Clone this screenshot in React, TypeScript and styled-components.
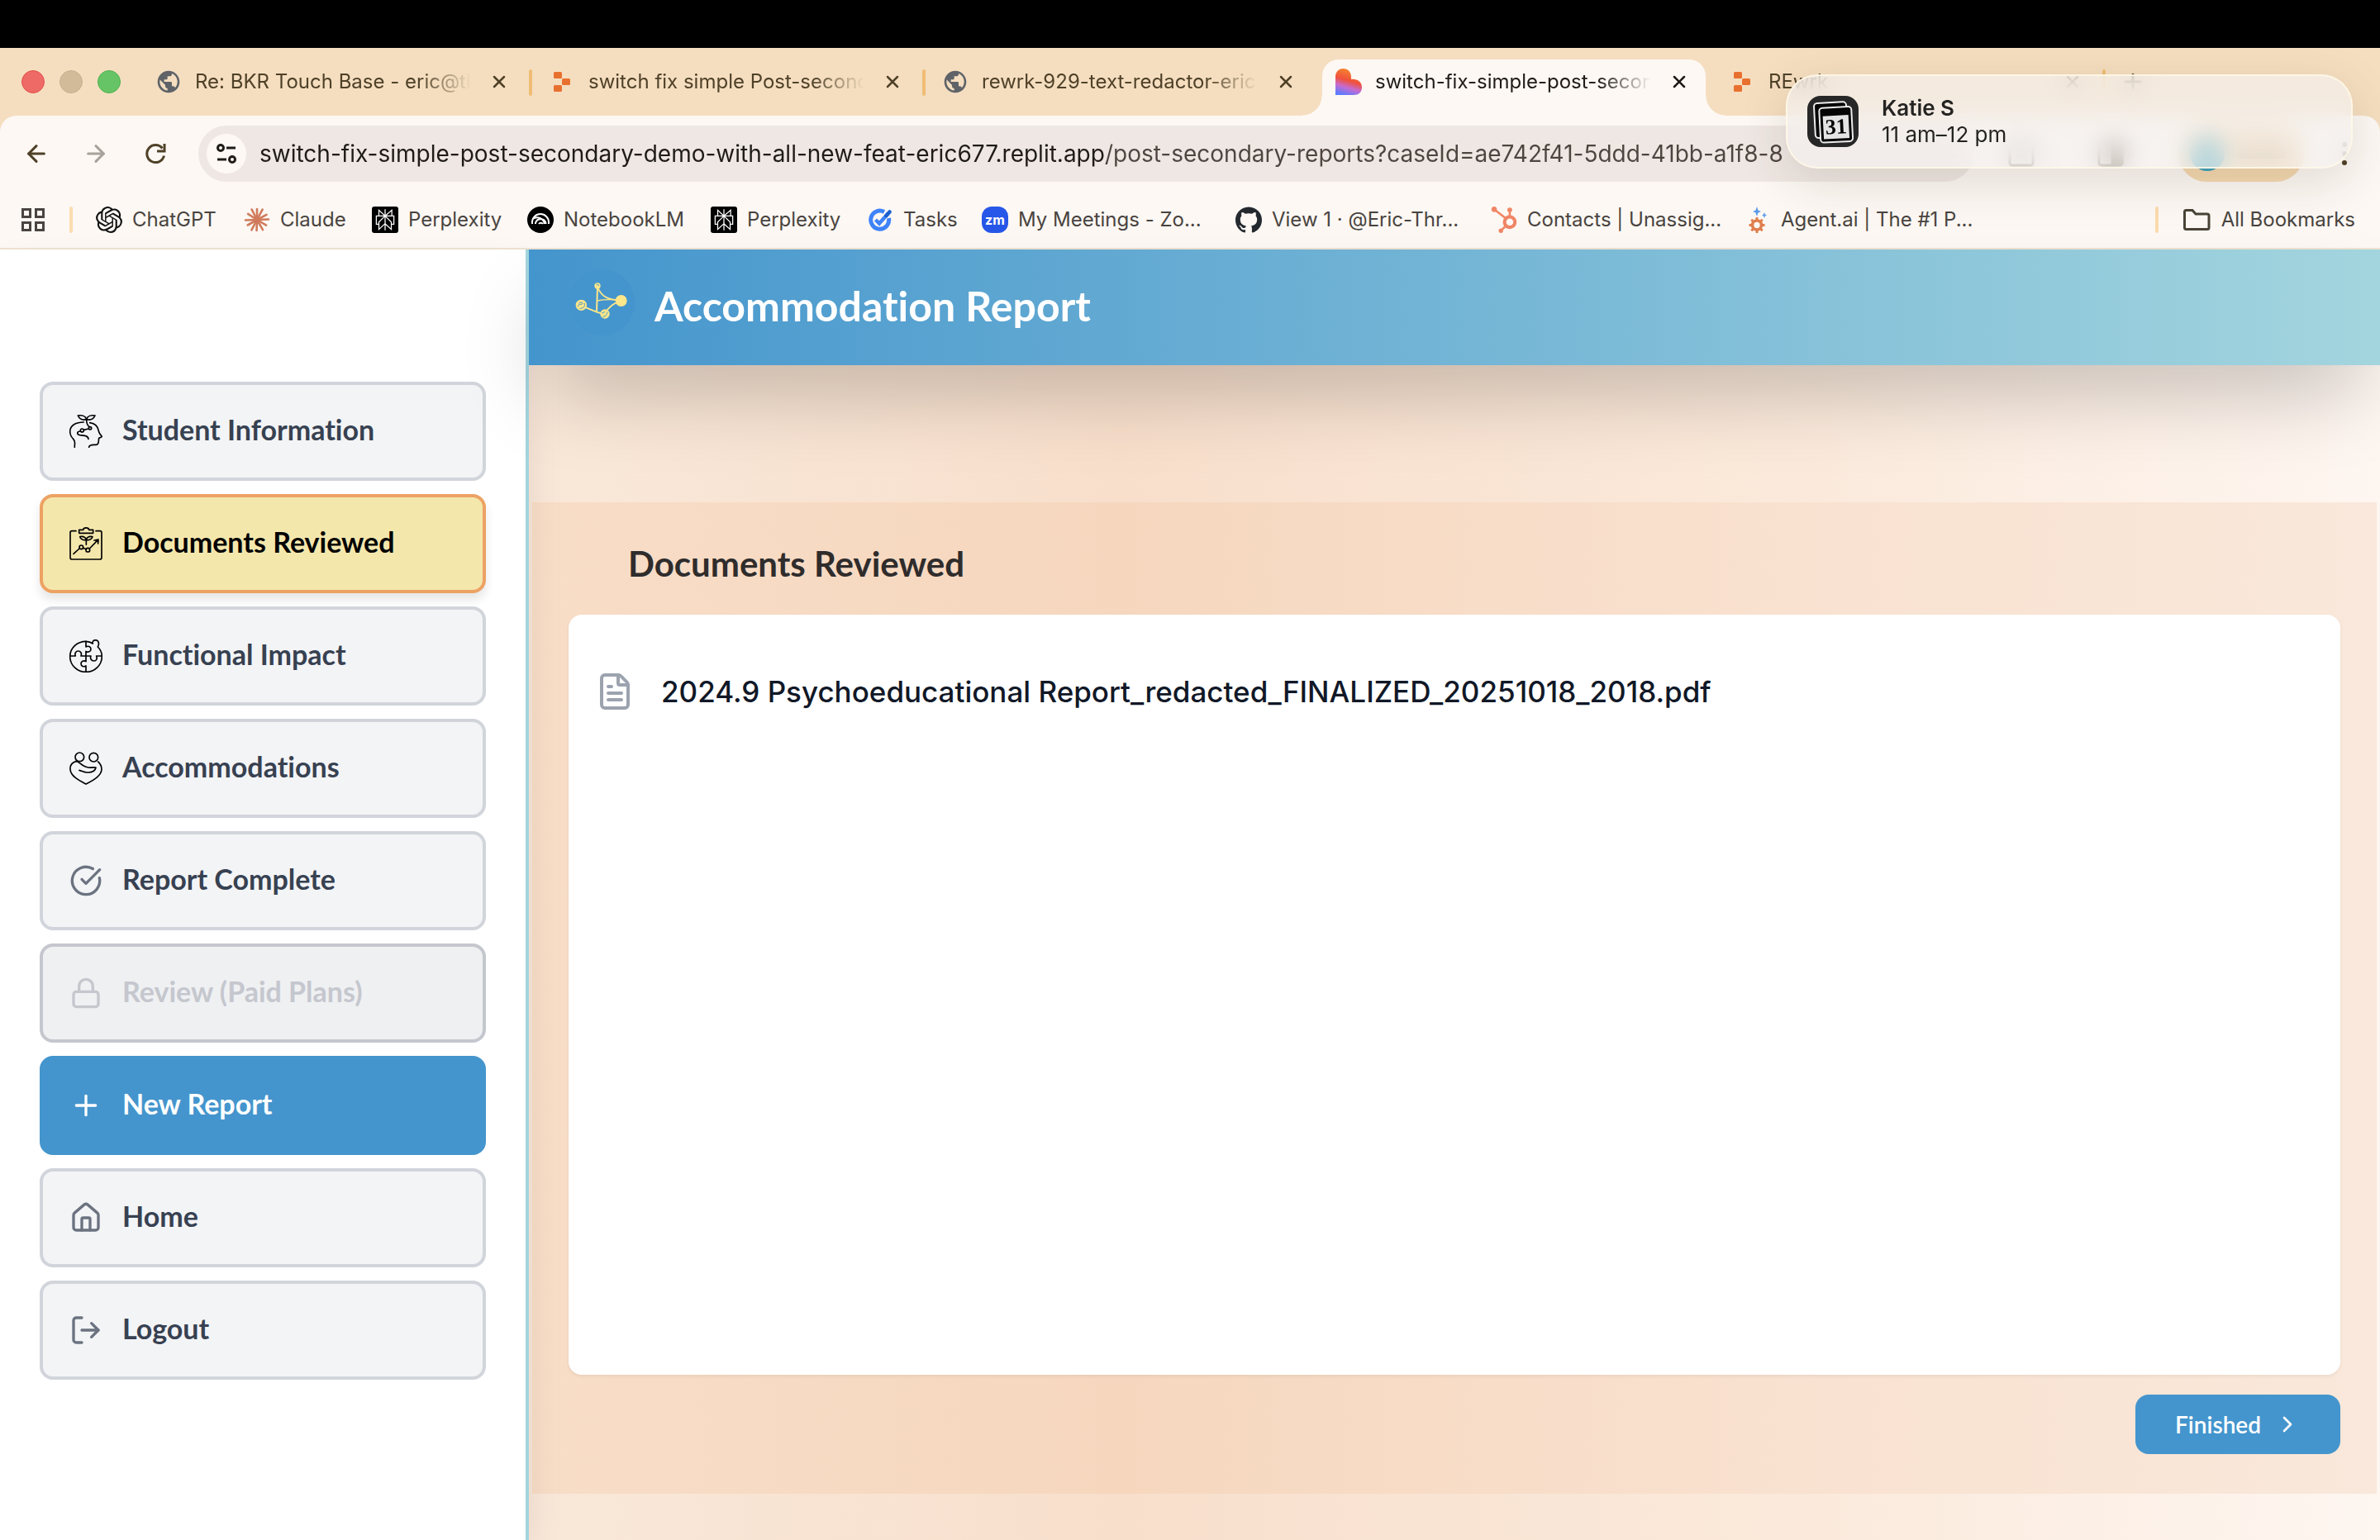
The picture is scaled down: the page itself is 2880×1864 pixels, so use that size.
import React from "react";
import styled, { createGlobalStyle, css } from "styled-components";
import {
  ArrowLeft,
  ArrowRight,
  ChevronRight,
  CircleCheckBig,
  FileText,
  House,
  Lock,
  LogOut,
  Plus,
  X,
} from "lucide-react";
import { SiGithub, SiHubspot, SiOpenai, SiPerplexity } from "react-icons/si";
import { MdPublic } from "react-icons/md";

const ui = `Inter, "Liberation Sans", sans-serif`;
const brand = `Lato, "Open Sans", sans-serif`;

const GlobalStyle = createGlobalStyle`
  *, *::before, *::after { box-sizing: border-box; }
  body { margin: 0; background: #fff; font-family: ${ui}; font-variant-ligatures: none; }
  button, input { font: inherit; color: inherit; }
  button { background: none; border: 0; padding: 0; cursor: pointer; font-variant-ligatures: none; }
  a { color: inherit; text-decoration: none; }
`;

const Page = styled.div`
  display: flex;
  flex-direction: column;
  min-height: 100vh;
`;

const MenuBar = styled.div`
  height: 58px;
  background: #000;
`;

/* ---------- browser chrome ---------- */

const Chrome = styled.header`
  position: relative;
  background: #f5dec0;
  color: #4f4128;
`;

const TabStrip = styled.div`
  display: flex;
  height: 82px;
  padding-left: 26px;
  overflow: hidden;
`;

const Lights = styled.div`
  display: flex;
  flex: none;
  align-items: center;
  gap: 18px;
  width: 140px;
`;

const Light = styled.button<{ $fill: string; $edge: string }>`
  width: 28px;
  height: 28px;
  border-radius: 50%;
  background: ${(p) => p.$fill};
  border: 1px solid ${(p) => p.$edge};
`;

const Tab = styled.div<{ $active?: boolean; $line?: boolean }>`
  position: relative;
  display: flex;
  align-items: center;
  flex: 0 1 476px;
  min-width: 0;
  padding: 0 24px 0 22px;

  ${(p) =>
    p.$line &&
    css`
      &::after {
        content: "";
        position: absolute;
        right: -2px;
        top: 26px;
        width: 4px;
        height: 32px;
        border-radius: 2px;
        background: #f0bd74;
      }
    `}
`;

const ActiveShape = styled.div`
  position: absolute;
  inset: 14px 6px 0;
  border-radius: 20px 20px 0 0;
  background: #fdf8f4;

  &::before,
  &::after {
    content: "";
    position: absolute;
    bottom: 0;
    width: 24px;
    height: 24px;
  }
  &::before {
    right: 100%;
    background: radial-gradient(circle at 0 0, transparent 23px, #fdf8f4 24px);
  }
  &::after {
    left: 100%;
    background: radial-gradient(circle at 100% 0, transparent 23px, #fdf8f4 24px);
  }
`;

const TabIcon = styled.span`
  position: relative;
  display: flex;
  flex: none;
  align-items: center;
  justify-content: center;
  width: 32px;
  height: 32px;
  margin-right: 16px;
`;

const TabTitle = styled.button<{ $active?: boolean }>`
  position: relative;
  flex: 1;
  min-width: 0;
  text-align: left;
  white-space: nowrap;
  font-size: 24px;
  line-height: 32px;
  color: ${(p) => (p.$active ? "#1f1b16" : "#4f4128")};
  mask-image: linear-gradient(90deg, #000 calc(100% - 64px), transparent);
`;

const TabClose = styled.button<{ $active?: boolean }>`
  position: relative;
  display: flex;
  flex: none;
  margin-left: 20px;
  padding: 2px;
  color: ${(p) => (p.$active ? "#1f1b16" : "#4f4128")};
`;

const NewTab = styled.button`
  display: flex;
  align-items: center;
  padding: 0 20px;
`;

const Bars = styled.div`
  background: #fdf8f4;
  border-radius: 20px 20px 0 0;
  border-bottom: 2px solid #eee2d2;
`;

const Toolbar = styled.div`
  display: flex;
  align-items: center;
  padding: 12px 28px;
  height: 92px;
`;

const NavButtons = styled.div`
  display: flex;
  flex: none;
  gap: 40px;
  margin-right: 36px;
`;

const NavButton = styled.button<{ $dim?: boolean }>`
  display: flex;
  color: ${(p) => (p.$dim ? "#a8a29b" : "#4f4128")};
`;

const Omnibox = styled.div`
  display: flex;
  align-items: center;
  flex: 1;
  height: 68px;
  padding: 0 24px 0 10px;
  border-radius: 34px;
  background: #efe7e3;
`;

const SiteInfo = styled.button`
  display: flex;
  flex: none;
  align-items: center;
  justify-content: center;
  width: 48px;
  height: 48px;
  margin-right: 16px;
  border-radius: 50%;
  background: #fdf8f4;
  color: #1f1b16;
`;

const Address = styled.input`
  flex: 1;
  min-width: 0;
  padding: 0;
  border: 0;
  outline: 0;
  font-size: 28px;
  line-height: 40px;
  color: transparent;
  background: linear-gradient(90deg, #1f1b16 1025px, #4f4540 1025px);
  background-clip: text;
`;

const ToolIcons = styled.div`
  display: flex;
  flex: none;
  align-items: center;
  gap: 72px;
  padding: 0 64px 0 40px;
  color: #4f4128;
`;

const Profile = styled.button`
  display: flex;
  align-items: center;
  gap: 14px;
  flex: none;
  width: 152px;
  height: 68px;
  padding: 0 14px;
  border-radius: 34px;
  background: #f5d9b1;

  &::before {
    content: "";
    width: 42px;
    height: 42px;
    border-radius: 50%;
    background: #3fa3bb;
  }
  &::after {
    content: "";
    width: 62px;
    height: 12px;
    border-radius: 6px;
    background: #b8a283;
  }
`;

const Dots = styled.button`
  display: grid;
  gap: 5px;
  flex: none;
  margin-left: 46px;
  margin-right: 12px;

  i {
    width: 6px;
    height: 6px;
    border-radius: 50%;
    background: #4f4128;
  }
`;

const Bookmarks = styled.nav`
  display: flex;
  align-items: center;
  height: 68px;
  padding: 0 30px 0 24px;
  font-size: 24px;
  line-height: 32px;
  color: #494440;
`;

const AppsButton = styled.button`
  display: flex;
  flex: none;
  padding: 0 2px;
`;

const Divider = styled.span`
  flex: none;
  width: 4px;
  height: 32px;
  border-radius: 2px;
  margin: 0 28px;
  background: #fbdcae;
`;

const Bookmark = styled.a<{ $width?: number }>`
  display: flex;
  align-items: center;
  gap: 12px;
  flex: ${(p) => (p.$width ? `0 0 ${p.$width}px` : "none")};
  white-space: nowrap;

  svg {
    flex: none;
  }
`;

const Spacer = styled.span`
  flex: 1;
`;

const Tile = styled.span<{ $fill: string; $round: number }>`
  display: flex;
  align-items: center;
  justify-content: center;
  width: 32px;
  height: 32px;
  flex: none;
  border-radius: ${(p) => p.$round}px;
  background: ${(p) => p.$fill};
  color: #fff;
  font-size: 16px;
  font-weight: 700;
  line-height: 16px;
`;

/* ---------- notification ---------- */

const Toast = styled.aside`
  position: absolute;
  z-index: 10;
  top: 32px;
  right: 33px;
  display: flex;
  align-items: center;
  gap: 28px;
  width: 686px;
  height: 114px;
  padding: 0 24px;
  border-radius: 38px;
  background: rgba(243, 240, 238, 0.66);
  backdrop-filter: blur(14px);
  border: 2px solid rgba(255, 248, 232, 0.85);
  box-shadow: 0 16px 60px rgba(60, 40, 20, 0.14);
  font-size: 26px;
  line-height: 32px;
  color: #242422;
`;

const ToastTitle = styled.strong`
  display: block;
  font-weight: 600;
`;

/* ---------- application ---------- */

const Shell = styled.div`
  display: flex;
  flex: 1;
`;

const Sidebar = styled.nav`
  position: relative;
  display: flex;
  flex-direction: column;
  gap: 16px;
  flex: none;
  width: 640px;
  padding: 160px 48px 48px;
  background: #fff;
  border-right: 4px solid #a3d5de;
  box-shadow: 0 20px 50px -10px rgba(0, 0, 0, 0.12);
`;

type Tone = "plain" | "current" | "locked" | "primary";

const tones = {
  plain: css`
    background: #f3f4f6;
    border-color: #d1d5db;
    color: #374151;
    svg.line { color: #6b7280; }
  `,
  current: css`
    background: #f4e7ac;
    border-color: #eda263;
    color: #000;
    box-shadow: 0 8px 12px rgba(0, 0, 0, 0.1);
  `,
  locked: css`
    background: #eff0f2;
    border-color: #c5c7ce;
    color: #c5c7ce;
  `,
  primary: css`
    background: #4495cd;
    border-color: #4495cd;
    color: #fff;
  `,
};

const NavItem = styled.button<{ $tone: Tone }>`
  display: flex;
  align-items: center;
  gap: 24px;
  height: 120px;
  padding: 0 32px;
  border: 4px solid;
  border-radius: 16px;
  font-family: ${brand};
  font-size: 34px;
  font-weight: 700;
  line-height: 40px;
  text-align: left;
  ${(p) => tones[p.$tone]}

  svg {
    flex: none;
  }
  svg.art {
    color: #000;
  }
`;

const NavLabel = styled.span`
  padding-bottom: 4px;
`;

const Main = styled.main`
  display: flex;
  flex-direction: column;
  flex: 1;
  min-width: 0;
  background: linear-gradient(90deg, #f9e8d9 0, #f8dfcc 32%, #fbeadc 70%, #fef6f1 100%);
`;

const Banner = styled.div`
  position: relative;
  display: flex;
  align-items: center;
  gap: 24px;
  height: 140px;
  padding: 0 48px;
  background: linear-gradient(90deg, #4495cd, #a3d5de);
  box-shadow: 0 50px 100px -24px rgba(0, 0, 0, 0.25);
`;

const LogoSlot = styled.span`
  display: block;
  height: 92px;
`;

const BannerTitle = styled.h1`
  margin: 0;
  padding-bottom: 4px;
  font-family: ${brand};
  font-size: 50px;
  font-weight: 700;
  line-height: 64px;
  color: #fff;
`;

const Panel = styled.section`
  display: flex;
  flex-direction: column;
  flex: 1;
  margin: 166px 4px 56px;
  padding: 44px 44px 48px;
  background: linear-gradient(90deg, #f8ddc7 0, #f6d7be 32%, #f9e1cf 66%, #f9e8db 100%);
`;

const PanelTitle = styled.h2`
  margin: 0 0 32px;
  padding: 0 72px;
  font-family: ${brand};
  font-size: 42px;
  font-weight: 700;
  line-height: 60px;
  color: #2f2c2c;
`;

const Card = styled.ul`
  flex: 1;
  margin: 0 0 24px;
  padding: 61px 32px;
  list-style: none;
  border-radius: 16px;
  background: #fff;
  box-shadow: 0 2px 4px rgba(0, 0, 0, 0.06);
`;

const FileRow = styled.li`
  display: flex;
  align-items: center;
  gap: 32px;
  padding: 4px 0;
  font-size: 35px;
  font-weight: 500;
  line-height: 56px;
  color: #111827;

  svg {
    flex: none;
    color: #9ca3af;
  }
`;

const Finish = styled.button`
  display: flex;
  align-items: center;
  align-self: flex-end;
  gap: 16px;
  height: 72px;
  padding: 0 48px;
  border-radius: 16px;
  background: #4495cd;
  color: #fff;
  font-family: ${brand};
  font-size: 28px;
  font-weight: 600;
  line-height: 40px;
`;

/* ---------- drawings ---------- */

const ReplitMark = () => (
  <svg width="32" height="32" viewBox="0 0 32 32" fill="#e8702f">
    <rect x="6" y="4" width="10" height="8" rx="1.5" />
    <rect x="16" y="12" width="10" height="8" rx="1.5" />
    <rect x="6" y="20" width="10" height="8" rx="1.5" />
  </svg>
);

const HeartMark = () => (
  <svg width="32" height="32" viewBox="0 0 32 32">
    <defs>
      <linearGradient id="heart" x1="0.6" y1="0" x2="0.3" y2="1">
        <stop offset="0" stopColor="#f58b2c" />
        <stop offset="0.45" stopColor="#f0503c" />
        <stop offset="0.7" stopColor="#c76bd0" />
        <stop offset="1" stopColor="#5b7cff" />
      </linearGradient>
    </defs>
    <path
      fill="url(#heart)"
      d="M0 10C0 4 4 0 9.500 0S19 4 19 10v3c7-1 13 3 13 9.500S28 32 22 32H0Z"
    />
  </svg>
);

const ReloadIcon = () => (
  <svg width="32" height="32" viewBox="0 0 32 32" fill="none" stroke="currentColor" strokeWidth="3">
    <path d="M26.500 18.500A10.500 10.500 0 1 1 24.500 9.500" />
    <path d="M27 4v9h-9" />
  </svg>
);

const TuneIcon = () => (
  <svg width="26" height="26" viewBox="0 0 26 26" fill="none" stroke="currentColor" strokeWidth="3">
    <circle cx="6" cy="6" r="3.500" />
    <path d="M13 6h11M2 20h11" />
    <circle cx="20" cy="20" r="3.500" />
  </svg>
);

const AppsIcon = () => (
  <svg width="28" height="28" viewBox="0 0 28 28" fill="none" stroke="currentColor" strokeWidth="3">
    <path d="M1.500 1.500h9v9h-9zM17.500 1.500h9v9h-9zM1.500 17.500h9v9h-9zM17.500 17.500h9v9h-9z" />
  </svg>
);

const ClaudeMark = () => (
  <svg width="32" height="32" viewBox="-16 -16 32 32" stroke="#d07b5c" strokeWidth="2.600" strokeLinecap="round">
    {[0, 28, 62, 88, 121, 150, 182, 208, 240, 268, 303, 333].map((a, i) => (
      <path key={a} d={`M0 0V${i % 2 ? -14 : -13}`} transform={`rotate(${a})`} />
    ))}
  </svg>
);

const NotebookMark = () => (
  <svg width="32" height="32" viewBox="0 0 32 32" fill="none" stroke="#fff" strokeWidth="2">
    <circle cx="16" cy="16" r="16" fill="#000" stroke="none" />
    <path d="M6 21v-2a10 10 0 0 1 20 0v2M10 21v-1a6.500 6.500 0 0 1 12.500 0v1M14 21a3 3 0 0 1 5 0M6.500 15c6-4 13-1 14.500 6" />
  </svg>
);

const TasksMark = () => (
  <svg width="32" height="32" viewBox="0 0 32 32" fill="none">
    <path d="M21 6.500A11 11 0 1 0 26.500 14" stroke="#3f83f8" strokeWidth="5" />
    <path d="m10.500 16 4.500 4.500L26 8" stroke="#3f83f8" strokeWidth="4.500" />
    <path d="m23.500 11 4-4.500" stroke="#1c5fd0" strokeWidth="4.500" strokeLinecap="round" />
  </svg>
);

const AgentMark = () => (
  <svg width="32" height="32" viewBox="0 0 32 32">
    <path fill="#5b9bea" d="M15 0l1.500 4.500L20 6l-3.500 1.500L15 12l-1.500-4.500L10 6l3.500-1.500ZM24 7l1 2.500L27 10.500l-2 1L24 14l-1-2.500-2-1 2-1Z" />
    <circle cx="15" cy="22.500" r="5.500" fill="none" stroke="#e07f4e" strokeWidth="3.600" />
    <g stroke="#e07f4e" strokeWidth="3">
      {[0, 45, 90, 135, 180, 225, 270, 315].map((a) => (
        <path key={a} d="M15 13v4" transform={`rotate(${a} 15 22.500)`} />
      ))}
    </g>
  </svg>
);

const FolderIcon = () => (
  <svg width="36" height="32" viewBox="0 0 36 32" fill="none" stroke="#4a4336" strokeWidth="3">
    <path d="M3.500 6.500q0-2 2-2h7.500l4 4.500H31q2 0 2 2v14.500q0 2-2 2H5.500q-2 0-2-2Z" />
  </svg>
);

const CalendarMark = () => (
  <svg width="62" height="62" viewBox="0 0 62 62">
    <rect width="62" height="62" rx="16" fill="#262726" />
    <g transform="rotate(-3 31 31)" fill="#050505" stroke="#ececec" strokeWidth="2">
      <rect x="9" y="8" width="39" height="42" rx="4" />
      <rect x="15" y="14" width="39" height="42" rx="4" />
      <rect x="19" y="24" width="31" height="28" fill="#e4e4e4" stroke="none" />
      <text
        x="34.500"
        y="46"
        fill="#050505"
        stroke="none"
        textAnchor="middle"
        fontFamily="Liberation Serif, serif"
        fontWeight="700"
        fontSize="26"
      >
        31
      </text>
    </g>
  </svg>
);

const BrandLogo = () => (
  <svg width="80" height="80" viewBox="24 18 240 240" fill="none" stroke="#fbe68a" strokeLinecap="round">
    <circle cx="144" cy="138" r="120" fill="#4495cd" stroke="none" />
    <path d="M129 84 126 172" strokeWidth="6" />
    <path d="M131 86C142 112 160 126 200 129" strokeWidth="5" />
    <path d="M128 132C150 128 180 126 206 132" strokeWidth="4" />
    <path d="M82 155 126 173 150 180" strokeWidth="6" />
    <path d="M160 172C172 154 186 142 206 136" strokeWidth="5" />
    <g fill="#fbe68a" stroke="none">
      <circle cx="129" cy="78" r="11" />
      <circle cx="70" cy="148" r="20" />
      <circle cx="156" cy="180" r="17" />
      <circle cx="215" cy="132" r="21" />
    </g>
    <g stroke="#4495cd" strokeWidth="3">
      <path d="M58 152c4-14 12-2 16-8s-4-8-12-4M66 160c14 0 18-8 16-18" />
      <path d="M150 190c10-2 14-8 14-16M146 176c4 2 6 0 8-4M126 72l8 4" />
    </g>
  </svg>
);

const Art = ({ children }: { children: React.ReactNode }) => (
  <svg
    className="art"
    width="40"
    height="40"
    viewBox="0 0 120 120"
    fill="none"
    stroke="currentColor"
    strokeWidth="5"
    strokeLinecap="round"
    strokeLinejoin="round"
  >
    {children}
  </svg>
);

const MindIcon = () => (
  <Art>
    <path d="M19 118C18 104 24 98 14 88 5 80 2 72 2 60 3 38 24 27 52 27" />
    <path d="M74 29c20 3 30 14 32 30 1 8 6 14 12 20-2 5-8 3-11 6-2 8 2 23-10 24-12 1-25-2-26 9" />
    <path d="M62 17C50 20 37 16 31 3c14-2 28 2 31 14ZM62 17c12 3 25-1 31-14-14-2-28 2-31 14ZM62 17c0 12 2 20 9 26" />
    <circle cx="75" cy="49" r="5" />
    <circle cx="46" cy="57" r="6" />
    <path d="M53 55l16-4M40 60c-14 0-14 12-2 14 16 1 30 2 31 14" />
  </Art>
);

const ClipboardIcon = () => (
  <Art>
    <path d="M24 14H9q-6 0-6 6v91q0 6 6 6h102q6 0 6-6V20q0-6-6-6H96" />
    <path d="M35 22V10h15c1-10 20-10 21 0h15v12Z" />
    <path d="M61 46c-10 3-20-2-23-11 10-2 20 1 23 11ZM61 46c10 3 20-2 23-11-10-2-20 1-23 11ZM61 46v18" />
    <path d="M15 97l21-19M50 76l10 4M73 78l31-32M90 48l15-3-1 15" />
    <circle cx="43" cy="73" r="7" />
    <circle cx="67" cy="83" r="7" />
  </Art>
);

const PuzzleIcon = () => (
  <Art>
    <path d="M60 7C28 7 2 31 2 62s26 56 58 56 58-25 58-56c0-14-6-26-15-35 6-10 4-24-7-25-10 0-13 6-11 13C78 10 70 7 60 7Z" />
    <path d="M60 7v20c7-5 18-1 18 8s-11 13-18 8v37c-8-5-18-1-18 8s10 13 18 8v22" />
    <path d="M2 60h20c-4-10 2-18 10-18s14 8 10 18h36c-4 10 2 18 11 18s13-8 9-18h20" />
  </Art>
);

const HugIcon = () => (
  <Art>
    <circle cx="37" cy="19" r="16" />
    <circle cx="88" cy="20" r="16" />
    <path d="M25 34C10 38 2 50 3 64c2 25 32 40 57 53 28-13 56-30 57-53 0-12-5-21-13-28" />
    <path d="M25 34c14 2 18 20 46 23 10 1 16-2 25 0-2 12-14 18-30 18-14 0-20-6-30-8" />
  </Art>
);

/* ---------- data ---------- */

const tabs = [
  { title: "Re: BKR Touch Base - eric@th", icon: <MdPublic size={34} color="#5f6368" />, line: true },
  { title: "switch fix simple Post-second", icon: <ReplitMark />, line: true },
  { title: "rewrk-929-text-redactor-eric", icon: <MdPublic size={34} color="#5f6368" /> },
  { title: "switch-fix-simple-post-secon", icon: <HeartMark />, active: true },
  { title: "REwrk", icon: <ReplitMark />, line: true },
];

const bookmarks = [
  { label: "ChatGPT", icon: <SiOpenai size={32} color="#111" />, width: 179 },
  { label: "Claude", icon: <ClaudeMark />, width: 155 },
  { label: "Perplexity", icon: <Tile $fill="#000" $round={3}><SiPerplexity size={26} /></Tile>, width: 188 },
  { label: "NotebookLM", icon: <NotebookMark />, width: 222 },
  { label: "Perplexity", icon: <Tile $fill="#000" $round={3}><SiPerplexity size={26} /></Tile>, width: 189 },
  { label: "Tasks", icon: <TasksMark />, width: 139 },
  { label: "My Meetings - Zo...", icon: <Tile $fill="#2757e8" $round={12}>zm</Tile>, width: 307 },
  { label: "View 1 · @Eric-Thr...", icon: <SiGithub size={32} color="#24292f" />, width: 309 },
  { label: "Contacts | Unassig...", icon: <SiHubspot size={32} color="#f08666" />, width: 307 },
  { label: "Agent.ai | The #1 P...", icon: <AgentMark />, width: 307 },
];

const navItems: { label: string; icon: React.ReactNode; tone: Tone }[] = [
  { label: "Student Information", icon: <MindIcon />, tone: "plain" },
  { label: "Documents Reviewed", icon: <ClipboardIcon />, tone: "current" },
  { label: "Functional Impact", icon: <PuzzleIcon />, tone: "plain" },
  { label: "Accommodations", icon: <HugIcon />, tone: "plain" },
  { label: "Report Complete", icon: <CircleCheckBig className="line" size={40} />, tone: "plain" },
  { label: "Review (Paid Plans)", icon: <Lock size={40} />, tone: "locked" },
  { label: "New Report", icon: <Plus size={40} />, tone: "primary" },
  { label: "Home", icon: <House className="line" size={40} />, tone: "plain" },
  { label: "Logout", icon: <LogOut className="line" size={40} />, tone: "plain" },
];

const address =
  "switch-fix-simple-post-secondary-demo-with-all-new-feat-eric677.replit.app/post-secondary-reports?caseId=ae742f41-5ddd-41bb-a1f8-8";

export default function App() {
  return (
    <Page>
      <GlobalStyle />
      <MenuBar />
      <Chrome>
        <TabStrip>
          <Lights>
            <Light $fill="#ee6a66" $edge="#e2504c" aria-label="Close window" />
            <Light $fill="#d2bb99" $edge="#c8b08d" aria-label="Minimise window" />
            <Light $fill="#66c466" $edge="#4db34f" aria-label="Zoom window" />
          </Lights>
          {tabs.map((t) => (
            <Tab key={t.title} $active={t.active} $line={t.line}>
              {t.active && <ActiveShape />}
              <TabIcon>{t.icon}</TabIcon>
              <TabTitle $active={t.active}>{t.title}</TabTitle>
              <TabClose $active={t.active} aria-label="Close tab">
                <X size={24} strokeWidth={2.5} />
              </TabClose>
            </Tab>
          ))}
          <NewTab aria-label="New tab">
            <Plus size={30} strokeWidth={2.5} />
          </NewTab>
        </TabStrip>
        <Bars>
          <Toolbar>
            <NavButtons>
              <NavButton aria-label="Back">
                <ArrowLeft size={32} strokeWidth={2.3} />
              </NavButton>
              <NavButton aria-label="Forward" $dim>
                <ArrowRight size={32} strokeWidth={2.3} />
              </NavButton>
              <NavButton aria-label="Reload">
                <ReloadIcon />
              </NavButton>
            </NavButtons>
            <Omnibox>
              <SiteInfo aria-label="Site information">
                <TuneIcon />
              </SiteInfo>
              <Address aria-label="Address" type="text" defaultValue={address} />
            </Omnibox>
            <ToolIcons>
              <svg width="36" height="36" viewBox="0 0 36 36" fill="none" stroke="currentColor" strokeWidth="3">
                <rect x="4" y="4" width="28" height="28" rx="3" />
              </svg>
              <svg width="36" height="36" viewBox="0 0 36 36" fill="none" stroke="currentColor" strokeWidth="3">
                <rect x="4" y="4" width="28" height="28" rx="3" />
                <rect x="20" y="6" width="12" height="24" fill="currentColor" />
              </svg>
            </ToolIcons>
            <Profile aria-label="Profile" />
            <Dots aria-label="Browser menu">
              <i />
              <i />
              <i />
            </Dots>
          </Toolbar>
          <Bookmarks aria-label="Bookmarks">
            <AppsButton aria-label="Tab groups">
              <AppsIcon />
            </AppsButton>
            <Divider />
            {bookmarks.map((b, i) => (
              <Bookmark key={i} href="#" $width={b.width}>
                {b.icon}
                {b.label}
              </Bookmark>
            ))}
            <Spacer />
            <Divider />
            <Bookmark href="#">
              <FolderIcon />
              All Bookmarks
            </Bookmark>
          </Bookmarks>
        </Bars>
        <Toast role="status">
          <CalendarMark />
          <div>
            <ToastTitle>Katie S</ToastTitle>
            11 am–12 pm
          </div>
        </Toast>
      </Chrome>
      <Shell>
        <Sidebar aria-label="Report steps">
          {navItems.map((n) => (
            <NavItem key={n.label} $tone={n.tone} disabled={n.tone === "locked"}>
              {n.icon}
              <NavLabel>{n.label}</NavLabel>
            </NavItem>
          ))}
        </Sidebar>
        <Main>
          <Banner>
            <LogoSlot>
              <BrandLogo />
            </LogoSlot>
            <BannerTitle>Accommodation Report</BannerTitle>
          </Banner>
          <Panel>
            <PanelTitle>Documents Reviewed</PanelTitle>
            <Card>
              <FileRow>
                <FileText size={48} />
                2024.9 Psychoeducational Report_redacted_FINALIZED_20251018_2018.pdf
              </FileRow>
            </Card>
            <Finish>
              Finished
              <ChevronRight size={32} />
            </Finish>
          </Panel>
        </Main>
      </Shell>
    </Page>
  );
}
